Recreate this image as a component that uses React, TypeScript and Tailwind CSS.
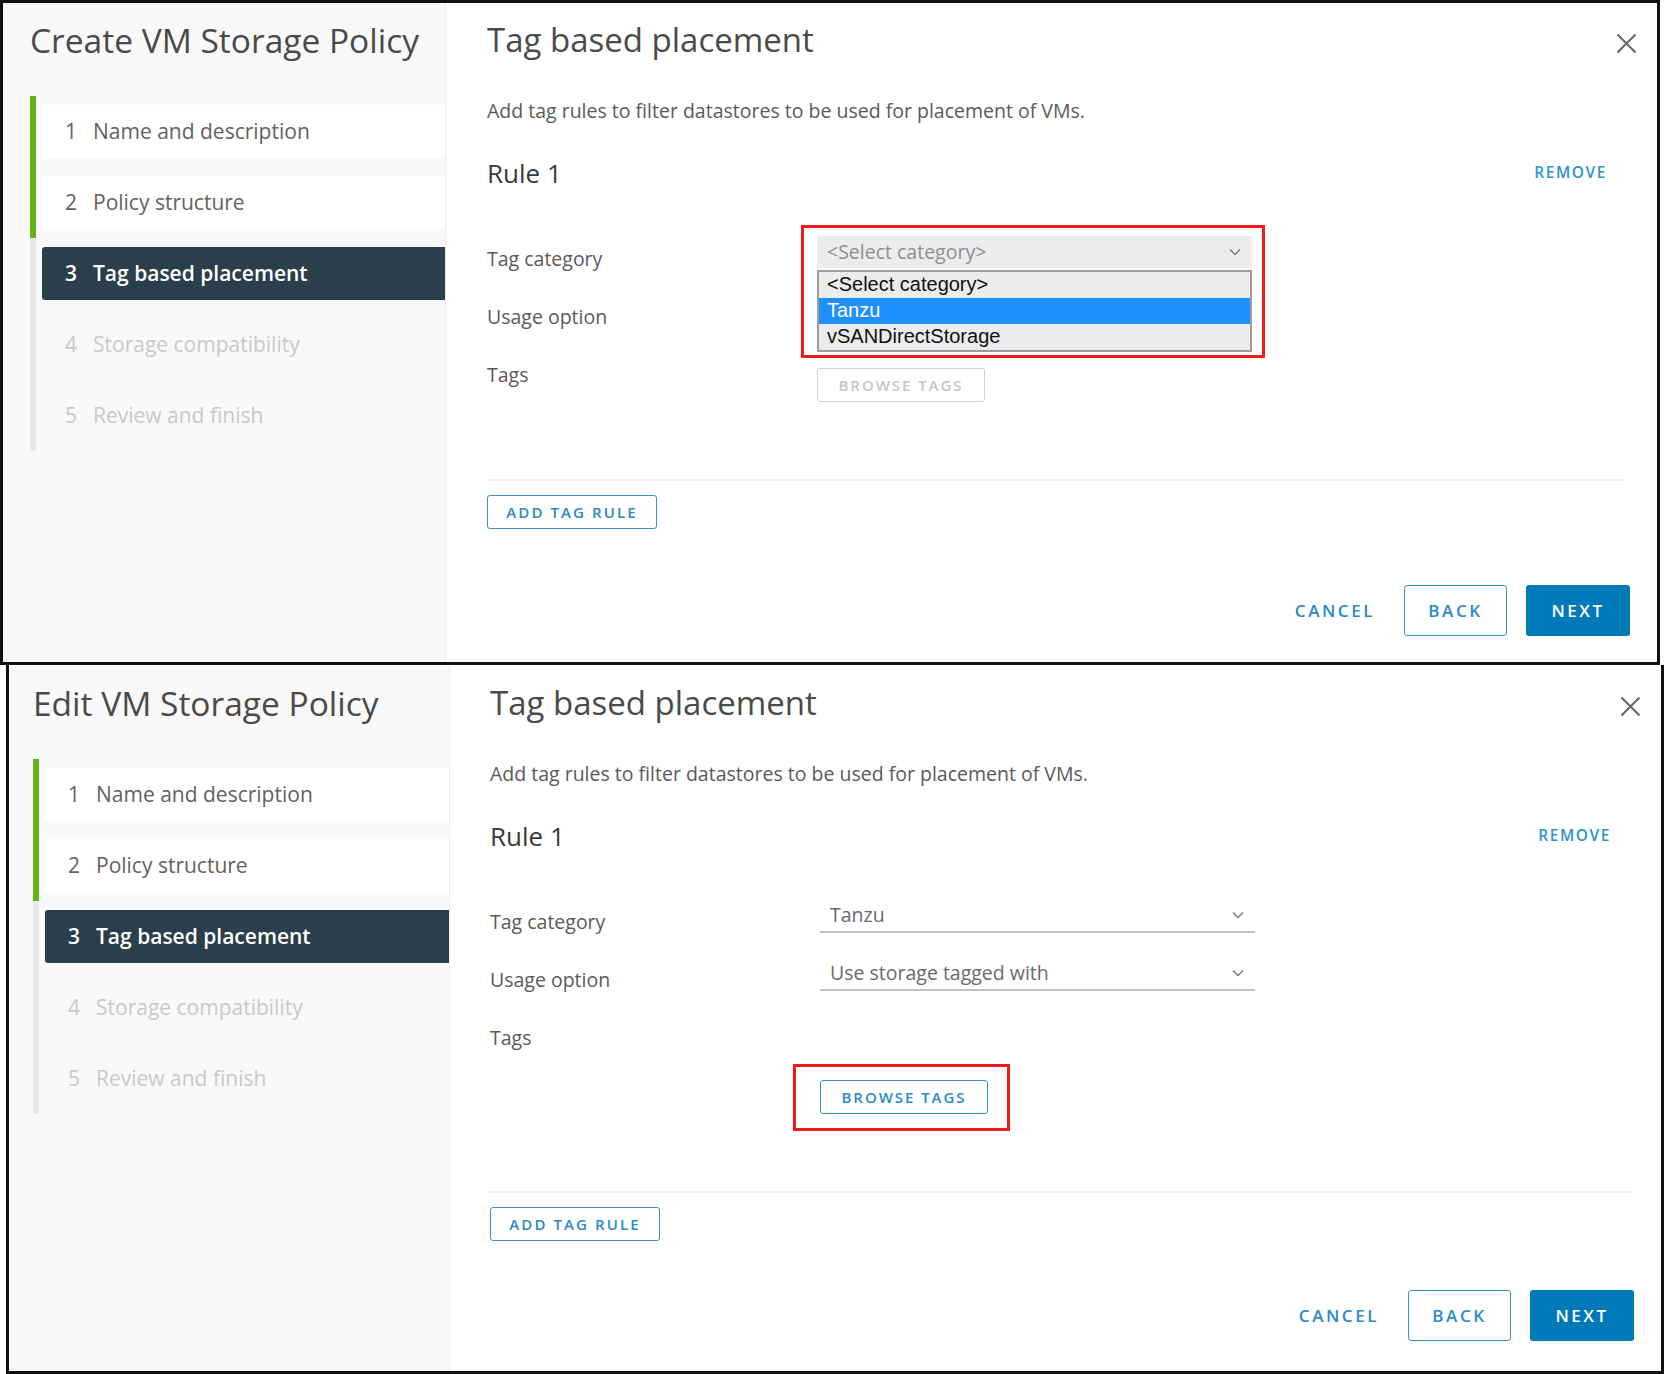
import React from "react";

type Variant = "create" | "edit";

const STEPS = [
  "Name and description",
  "Policy structure",
  "Tag based placement",
  "Storage compatibility",
  "Review and finish",
];

function CloseIcon() {
  return (
    <svg width="21" height="21" viewBox="0 0 21 21" fill="none">
      <path d="M1.5 1.5L19.5 19.5M19.5 1.5L1.5 19.5" stroke="#666" strokeWidth="2" />
    </svg>
  );
}

function Chevron() {
  return (
    <svg width="12" height="8" viewBox="0 0 12 8" fill="none">
      <polyline points="1,1.5 6,6.5 11,1.5" stroke="#7a7a7a" strokeWidth="1.5" />
    </svg>
  );
}

function StepRow({ n, label, current }: { n: number; label: string; current: number }) {
  const done = n - 1 < current;
  const active = n - 1 === current;
  return (
    <div className="flex h-[71px]">
      <div className={done ? "w-[6px] bg-[#62b515]" : "w-[6px] bg-[#e7e7e7]"} />
      <div
        className={
          active
            ? "ml-[6px] mt-[9px] flex h-[53px] flex-1 items-center rounded-l-[3px] bg-[#2b3e4c] pl-[23px] text-[21px] font-semibold text-white"
            : done
              ? "ml-[6px] mt-[9px] flex h-[53px] flex-1 items-center rounded-l-[3px] bg-white pl-[23px] text-[21px] text-[#626262]"
              : "ml-[6px] mt-[9px] flex h-[53px] flex-1 items-center pl-[23px] text-[21px] text-[#c9c9c9]"
        }
      >
        <span className="w-[28px]">{n}</span>
        <span>{label}</span>
      </div>
    </div>
  );
}

function Sidebar({ title, variant }: { title: string; variant: Variant }) {
  return (
    <aside
      className={
        variant === "create"
          ? "flex w-[443px] shrink-0 flex-col border-r border-[#ebebeb] bg-[#f9f9f9] pl-[27px]"
          : "flex w-[441px] shrink-0 flex-col border-r border-[#ebebeb] bg-[#f9f9f9] pl-[24px]"
      }
    >
      <h1 className="pt-[17px] text-[33.5px] leading-[40px] text-[#4a4a4a]">{title}</h1>
      <div className="mt-[36px]">
        {STEPS.map((s, i) => (
          <StepRow key={s} n={i + 1} label={s} current={2} />
        ))}
      </div>
    </aside>
  );
}

function FormRow({ label, children }: { label: string; children?: React.ReactNode }) {
  return (
    <div className="flex h-[58px] items-start">
      <div className="w-[330px] shrink-0 pt-[9px] text-[19.5px] leading-[28px] text-[#5a5a5a]">{label}</div>
      <div className="w-[435px]">{children}</div>
    </div>
  );
}

function UnderlineSelect({ value }: { value: string }) {
  return (
    <div className="flex h-[34px] items-center justify-between border-b-2 border-[#c2c2c2] pl-[10px] pr-[11px] text-[19.5px] text-[#6a6a6a]">
      <span>{value}</span>
      <Chevron />
    </div>
  );
}

function Dialog({ variant }: { variant: Variant }) {
  const create = variant === "create";
  return (
    <div
      className={
        create
          ? "flex h-[665px] w-[1660px] border-[3px] border-[#111]"
          : "ml-[6px] flex h-[709px] w-[1658px] border-[3px] border-t-0 border-[#111] pt-[1px]"
      }
    >
      <Sidebar title={create ? "Create VM Storage Policy" : "Edit VM Storage Policy"} variant={variant} />

      <main
        className={
          create
            ? "flex flex-1 flex-col bg-white pb-[26px] pl-[41px] pr-[27px]"
            : "flex flex-1 flex-col bg-white pb-[30px] pl-[40px] pr-[27px]"
        }
      >
        {/* Header */}
        <div className="flex items-start justify-between pt-[17px]">
          <h2 className="text-[33px] leading-[40px] text-[#4a4a4a]">Tag based placement</h2>
          <button className="-mr-[7px] mt-[13px]">
            <CloseIcon />
          </button>
        </div>

        <p className="mt-[37px] text-[19.5px] leading-[28px] text-[#5a5a5a]">
          Add tag rules to filter datastores to be used for placement of VMs.
        </p>

        {/* Rule header */}
        <div className="mt-[30px] flex h-[36px] items-center justify-between">
          <span className="text-[26px] leading-[36px] text-[#3a3a3a]">Rule 1</span>
          <span className="mr-[23px] text-[15.5px] font-semibold tracking-[0.1em] text-[#2f94cf]">REMOVE</span>
        </div>

        {/* Form */}
        <div className="mt-[45px]">
          <FormRow label="Tag category">
            {create ? (
              <div className="relative">
                <div className="flex h-[32px] items-center justify-between bg-[#ececec] pl-[10px] pr-[11px] text-[19.5px] text-[#8f8f8f]">
                  <span>&lt;Select category&gt;</span>
                  <Chevron />
                </div>
                <div className="absolute left-0 top-[34px] w-full border-2 border-[#9d9d9d] bg-[#ececec] font-['Liberation_Sans',Arial,sans-serif] text-[20px] text-[#111]">
                  <div className="h-[26px] pl-[8px] leading-[25px]">&lt;Select category&gt;</div>
                  <div className="h-[26px] bg-[#1e90ff] pl-[8px] leading-[25px] text-white">Tanzu</div>
                  <div className="h-[26px] pl-[8px] leading-[25px]">vSANDirectStorage</div>
                </div>
                <div className="pointer-events-none absolute left-[-16px] top-[-11px] h-[133px] w-[464px] border-[3px] border-[#f01a1a]" />
              </div>
            ) : (
              <UnderlineSelect value="Tanzu" />
            )}
          </FormRow>
          <FormRow label="Usage option">{!create && <UnderlineSelect value="Use storage tagged with" />}</FormRow>
          <FormRow label="Tags">
            {create && (
              <button className="mt-[16px] h-[34px] w-[168px] rounded-[3px] border-[1.5px] border-[#d2d2d2] text-[15px] font-semibold tracking-[0.13em] text-[#c6c6c6]">
                BROWSE TAGS
              </button>
            )}
          </FormRow>
          {!create && (
            <div className="relative ml-[330px] mt-[7px] w-[168px]">
              <button className="h-[34px] w-[168px] rounded-[3px] border-[1.5px] border-[#3a95cf] text-[15px] font-semibold tracking-[0.13em] text-[#2b8ac6]">
                BROWSE TAGS
              </button>
              <div className="pointer-events-none absolute left-[-27px] top-[-16px] h-[67px] w-[217px] border-[3px] border-[#f01a1a]" />
            </div>
          )}
        </div>

        <div className={create ? "mr-[6px] mt-[69px] h-[2px] bg-[#efefef]" : "mr-[4px] mt-[77px] h-[2px] bg-[#efefef]"} />

        <button className="mt-[14px] h-[34px] w-[170px] self-start rounded-[3px] border-[1.5px] border-[#3a95cf] text-[15px] font-semibold tracking-[0.14em] text-[#2b8ac6]">
          ADD TAG RULE
        </button>

        {/* Footer */}
        <div className="mt-auto flex items-center justify-end">
          <span className="mr-[29px] text-[17px] font-semibold tracking-[0.15em] text-[#2b8ac6]">CANCEL</span>
          <button className="h-[51px] w-[103px] rounded-[3px] border-[1.5px] border-[#3a95cf] text-[17px] font-semibold tracking-[0.15em] text-[#2b8ac6]">
            BACK
          </button>
          <button className="ml-[19px] h-[51px] w-[104px] rounded-[3px] bg-[#0079b8] text-[17px] font-semibold tracking-[0.15em] text-white">
            NEXT
          </button>
        </div>
      </main>
    </div>
  );
}

export default function App() {
  return (
    <div className="h-[1374px] w-[1664px] bg-white font-['Open_Sans',sans-serif]">
      <Dialog variant="create" />
      <Dialog variant="edit" />
    </div>
  );
}
